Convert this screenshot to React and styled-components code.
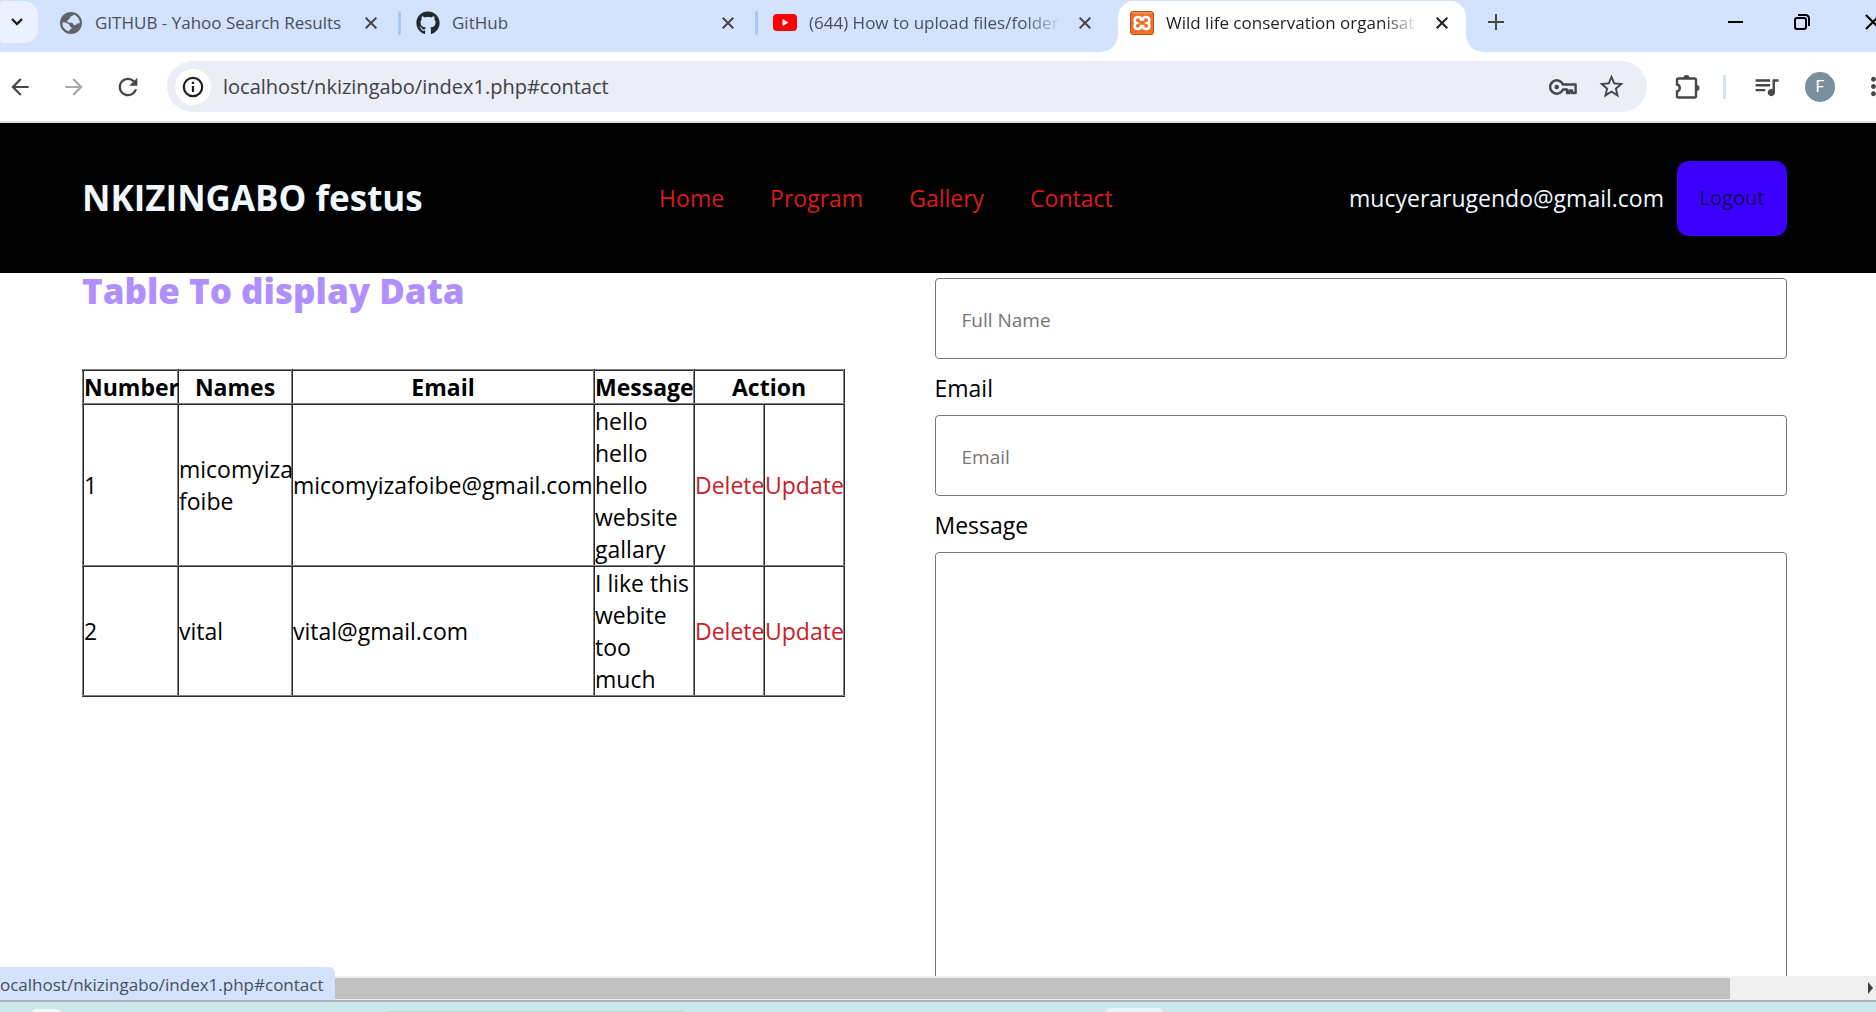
import React from "react";
import styled, { createGlobalStyle } from "styled-components";
import { FaGithub } from "react-icons/fa";
import { MdArrowBack, MdArrowForward, MdMoreVert, MdQueueMusic, MdRefresh, MdStarOutline } from "react-icons/md";

const GlobalStyle = createGlobalStyle`
  *, *::before, *::after { box-sizing: border-box; }
  body {
    margin: 0;
    background: #fff;
    color: #000;
    font-family: "Open Sans", "Noto Sans", sans-serif;
    font-size: 23px;
    line-height: 32px;
  }
  button, input, textarea { font: inherit; }
`;

const Shell = styled.div`
  display: flex;
  flex-direction: column;
  height: 100vh;
  overflow: hidden;
`;

const IconButton = styled.button`
  display: flex;
  flex: none;
  align-items: center;
  justify-content: center;
  width: ${(p) => p.$width || 40}px;
  height: 40px;
  padding: 0;
  border: 0;
  background: none;
  color: ${(p) => p.$color || "#47474a"};
`;

/* Tab strip */

const TabStrip = styled.div`
  display: flex;
  flex: none;
  height: 52px;
  background: #d3e2fd;
`;

const TabSearch = styled.button`
  display: flex;
  flex: none;
  align-items: center;
  justify-content: center;
  width: 38px;
  height: 42px;
  margin: 1px 6px 0 0;
  padding: 0 4px 0 0;
  border: 0;
  border-radius: 4px 14px 14px 4px;
  background: #ebf1fe;
  color: #1f1f1f;
`;

const Tab = styled.div`
  position: relative;
  display: flex;
  flex: none;
  align-items: center;
  gap: 12px;
  width: ${(p) => (p.$active ? 348 : 357)}px;
  height: ${(p) => (p.$active ? 51 : 45)}px;
  margin: ${(p) => (p.$active ? "1px 0 0 3px" : "0")};
  padding: ${(p) => (p.$active ? "0 12px 8px 12px" : "0 18px 0 15px")};
  border-radius: 16px 16px 0 0;
  background: ${(p) => (p.$active ? "#fff" : "none")};
  color: ${(p) => (p.$active ? "#1f1f1f" : "#47505c")};

  &::before, &::after {
    content: "";
    display: ${(p) => (p.$active ? "block" : "none")};
    position: absolute;
    bottom: 0;
    width: 16px;
    height: 16px;
  }
  &::before {
    right: 100%;
    background: radial-gradient(circle at 0 0, transparent 15px, #fff 16px);
  }
  &::after {
    left: 100%;
    background: radial-gradient(circle at 100% 0, transparent 15px, #fff 16px);
  }
`;

const Favicon = styled.span`
  display: flex;
  flex: none;
  align-items: center;
  justify-content: center;
  width: 24px;
  height: 24px;
  color: #24292f;
`;

const TabTitle = styled.span`
  flex: 1;
  min-width: 0;
  overflow: hidden;
  font-size: 17px;
  line-height: 24px;
  white-space: nowrap;
  mask-image: ${(p) => (p.$fade ? "linear-gradient(90deg, #000 86%, transparent)" : "none")};
`;

const TabDivider = styled.span`
  flex: none;
  width: 3px;
  height: 24px;
  margin: 11px 0 0 -3px;
  border-radius: 2px;
  background: #a8c7fa;
`;

const NewTab = styled(IconButton)`
  margin: 2px auto 0 10px;
`;

const WindowControls = styled.div`
  display: flex;
  flex: none;
  gap: 35px;
  margin: 2px -17px 0 0;
`;

/* Toolbar */

const Toolbar = styled.div`
  display: flex;
  flex: none;
  align-items: center;
  height: 71px;
  border-bottom: 2px solid #dfe1e1;
  background: #fff;
`;

const NavButtons = styled.div`
  display: flex;
  gap: 14px;
  margin-right: 19px;
`;

const Omnibox = styled.div`
  display: flex;
  flex: 1;
  align-items: center;
  height: 51px;
  margin-right: 20px;
  padding: 0 16px 0 8px;
  border-radius: 26px;
  background: #ebedf7;
`;

const SiteInfo = styled(IconButton)`
  width: 36px;
  height: 36px;
  border-radius: 18px;
  background: #fff;
  color: #1f1f1f;
`;

const Address = styled.input`
  flex: 1;
  min-width: 0;
  margin-left: 12px;
  padding: 0;
  border: 0;
  outline: 0;
  background: none;
  color: #404144;
  font-size: 20px;
`;

const ToolbarDivider = styled.span`
  width: 3px;
  height: 24px;
  margin: 0 20px 0 16px;
  background: #d3e2fd;
`;

const Avatar = styled.button`
  flex: none;
  width: 30px;
  height: 30px;
  margin: 0 18px 0 19px;
  padding: 0;
  border: 0;
  border-radius: 15px;
  background: #78909c;
  color: #fff;
  font-family: Roboto, sans-serif;
  font-size: 16px;
  line-height: 30px;
`;

const MenuButton = styled(IconButton)`
  margin-right: -17px;
`;

/* Page */

const Page = styled.main`
  flex: 1;
  min-height: 0;
  overflow: hidden;
`;

const Header = styled.header`
  display: flex;
  align-items: center;
  justify-content: space-between;
  height: 150px;
  padding: 0 89px 0 82px;
  background: #000;
  color: aliceblue;
`;

const Brand = styled.h1`
  margin: 0;
  font-size: 35px;
  font-weight: 700;
`;

const Nav = styled.nav`
  display: flex;
  gap: 46px;
`;

const Link = styled.a`
  color: ${(p) => (p.$nav ? "#dc1a1a" : "#c8202a")};
  text-decoration: none;
`;

const Account = styled.div`
  display: flex;
  align-items: center;
  gap: 13px;
`;

const Logout = styled.button`
  width: 110px;
  height: 75px;
  padding: 0;
  border: 0;
  border-radius: 12px;
  background: #3b00ff;
  color: #12005a;
  font-size: 20px;
`;

const Columns = styled.div`
  display: grid;
  grid-template-columns: 1fr 1fr;
  align-items: start;
  padding: 0 89px 0 82px;
`;

const Heading = styled.h2`
  margin: 0 0 60px;
  color: #b090ff;
  font-size: 35px;
  font-weight: 800;
  line-height: 36px;
`;

const DataTable = styled.table`
  width: 762px;
  table-layout: fixed;
  border-collapse: collapse;
`;

const Col = styled.col`
  width: ${(p) => p.$width}px;
`;

const cell = `
  height: 34px;
  padding: 0;
  border: 2px ridge #808080;
`;

const HeadCell = styled.th`
  ${cell}
  font-weight: 700;
`;

const Cell = styled.td`
  ${cell}
`;

const Form = styled.form`
  display: flex;
  flex-direction: column;
  padding-top: 5px;
`;

const Label = styled.label`
  margin: 13px 0 11px;
`;

const Field = styled.input`
  width: 100%;
  height: 81px;
  padding: 2px 26px 0;
  border: 1px solid #767676;
  border-radius: 4px;
  background: #fff;
  font-size: 19px;
  &::placeholder { color: #757575; }
`;

const MessageField = styled.textarea`
  width: 100%;
  height: 560px;
  padding: 26px;
  border: 1px solid #767676;
  border-radius: 4px;
  background: #fff;
  font-size: 19px;
  resize: none;
`;

/* Window bottom */

const BottomBar = styled.div`
  position: relative;
  display: flex;
  flex: none;
  align-items: center;
  height: 24px;
  background: #f0f0f0;
`;

const Thumb = styled.div`
  flex: 1;
  height: 21px;
  margin-right: 138px;
  background: #c1c1c1;
`;

const StatusBubble = styled.div`
  position: absolute;
  left: 0;
  bottom: 0;
  width: 335px;
  height: 33px;
  border-radius: 0 6px 0 0;
  background: #d3e2fd;
  color: #47505c;
  font-size: 17px;
  line-height: 36px;
  white-space: nowrap;
`;

const Taskbar = styled.div`
  display: flex;
  flex: none;
  align-items: flex-end;
  height: 12px;
  border-top: 2px solid #a5b5ba;
  background: #cde7ec;
`;

const TaskItem = styled.span`
  width: ${(p) => p.$width}px;
  height: ${(p) => p.$height}px;
  margin-left: ${(p) => p.$gap}px;
  border-radius: 6px 6px 0 0;
  background: ${(p) => p.$color};
`;

const Cross = ({ size = 12, weight = 2 }) => (
  <svg width={size} height={size} viewBox="0 0 12 12" fill="none" stroke="currentColor" strokeWidth={weight}>
    <path d="M.7.7 11.3 11.3M11.3.7.7 11.3" />
  </svg>
);

const Globe = () => (
  <svg width="22" height="22" viewBox="0 0 22 22">
    <circle cx="11" cy="11" r="11" fill="#5f6368" />
    <path d="M13.5 2.6c-1 2.3-3.4 1.3-3.6 3.3-.1 1.6-2.6 1.300-2.600 3 0 1.800 2 1.900 4.200 1.900 1.900 0 1.300 2.500 3.300 2.500 1.200 0 1.700-1.600 3-1.800.9-.1 1.500-.2 2-.1A8.600 8.600 0 0 0 13.500 2.600Z" fill="#d3e2fd" />
    <path d="M2.400 10.500c2.300-.2 5 .2 6.500 1.700 1.200 1.200.4 2.600 2 2.900 1.500.3 1 1.900-.3 2.200-1.100.3-1 1.400-1.600 2.200A8.600 8.600 0 0 1 2.400 10.500Z" fill="#d3e2fd" />
  </svg>
);

const YouTube = () => (
  <svg width="24" height="17" viewBox="0 0 24 17">
    <rect width="24" height="17" rx="4" fill="#f00" />
    <path d="M9.500 5v7l6-3.500Z" fill="#fff" />
  </svg>
);

const Xampp = () => (
  <svg width="24" height="24" viewBox="0 0 24 24">
    <rect x=".5" y=".5" width="23" height="23" rx="2.500" fill="#e8702a" stroke="#c4500f" />
    <path d="M2 2h20" stroke="#f5a875" />
    <path
      d="M8.500 6C5.700 6 4.600 7.600 4.600 9.200c0 1.500.8 2.400 1.800 2.800-1 .4-1.800 1.400-1.800 2.800C4.600 16.600 6 18 8 18s3-1.300 3-3h2c0 1.700 1 3 3 3s3.400-1.400 3.400-3.200c0-1.400-.8-2.400-1.800-2.800 1-.4 1.800-1.300 1.800-2.800C19.400 7.600 18.300 6 15.500 6c-1.700 0-2.500 1-2.500 2.500h-2C11 7 10.200 6 8.500 6Z"
      fill="none" stroke="#fff" strokeWidth="2.600"
    />
  </svg>
);

const Info = () => (
  <svg width="22" height="22" viewBox="0 0 22 22" fill="none" stroke="currentColor" strokeWidth="2.200">
    <circle cx="11" cy="11" r="9.200" />
    <path d="M11 10v6M11 5.800V8" />
  </svg>
);

const Key = () => (
  <svg width="28" height="16" viewBox="0 0 28 16" fill="none" stroke="currentColor" strokeWidth="2.400">
    <path d="M14 5.500A6.700 6.700 0 1 0 14 10.500h4V14h2.500v-2.500H23V14h3.600V5.500Z" strokeLinejoin="round" />
    <circle cx="7.800" cy="8" r="2.300" fill="currentColor" stroke="none" />
  </svg>
);

const Puzzle = () => (
  <svg width="25" height="25" viewBox="0 0 25 25">
    <path d="M3.500 4.500h16a1.500 1.500 0 0 1 1.500 1.500v16a1.500 1.500 0 0 1-1.500 1.500h-16A1.500 1.500 0 0 1 2 22v-4.500a3.600 3.600 0 0 0 0-7V6a1.500 1.500 0 0 1 1.500-1.500Z" fill="none" stroke="currentColor" strokeWidth="2.400" />
    <path d="M8.500 4a3 3 0 0 1 6 0ZM21.500 11a3 3 0 0 1 0 6Z" fill="currentColor" />
  </svg>
);

const tabs = [
  { title: "GITHUB - Yahoo Search Results", icon: <Globe /> },
  { title: "GitHub", icon: <FaGithub size={24} /> },
  { title: "(644) How to upload files/folder", icon: <YouTube />, fade: true },
  { title: "Wild life conservation organisat", icon: <Xampp />, fade: true, active: true },
];

const rows = [
  { id: 1, name: "micomyiza foibe", email: "micomyizafoibe@gmail.com", message: "hello hello hello website gallary" },
  { id: 2, name: "vital", email: "vital@gmail.com", message: "I like this webite too much" },
];

const columnWidths = [95, 114, 302, 100, 70, 80];

export default function App() {
  return (
    <Shell>
      <GlobalStyle />
      <TabStrip>
        <TabSearch aria-label="Search tabs">
          <svg width="12" height="8" viewBox="0 0 12 8" fill="none" stroke="currentColor" strokeWidth="2.400">
            <path d="m1 1 5 5 5-5" />
          </svg>
        </TabSearch>
        {tabs.map((tab, i) => (
          <React.Fragment key={tab.title}>
            <Tab $active={tab.active}>
              <Favicon>{tab.icon}</Favicon>
              <TabTitle $fade={tab.fade}>{tab.title}</TabTitle>
              <IconButton $width={24} $color={tab.active ? "#1f1f1f" : undefined} aria-label="Close tab">
                <Cross />
              </IconButton>
            </Tab>
            {i < 2 && <TabDivider />}
          </React.Fragment>
        ))}
        <NewTab aria-label="New tab">
          <svg width="16" height="16" viewBox="0 0 16 16" stroke="currentColor" strokeWidth="2">
            <path d="M8 0v16M0 8h16" />
          </svg>
        </NewTab>
        <WindowControls>
          <IconButton $width={32} $color="#000" aria-label="Minimize">
            <svg width="15" height="2" viewBox="0 0 15 2"><path d="M0 0h15v2H0z" fill="currentColor" /></svg>
          </IconButton>
          <IconButton $width={32} $color="#000" aria-label="Restore">
            <svg width="16" height="16" viewBox="0 0 16 16" fill="none" stroke="currentColor" strokeWidth="2">
              <rect x="1" y="4" width="11" height="11" rx="2" />
              <path d="M4 1h7.500A3.500 3.500 0 0 1 15 4.500V12" />
            </svg>
          </IconButton>
          <IconButton $width={40} $color="#000" aria-label="Close window">
            <Cross size={16} weight={1.5} />
          </IconButton>
        </WindowControls>
      </TabStrip>

      <Toolbar>
        <NavButtons>
          <IconButton aria-label="Back"><MdArrowBack size={26} /></IconButton>
          <IconButton $color="#a9a9ab" aria-label="Forward"><MdArrowForward size={26} /></IconButton>
          <IconButton aria-label="Reload"><MdRefresh size={28} /></IconButton>
        </NavButtons>
        <Omnibox>
          <SiteInfo aria-label="View site information"><Info /></SiteInfo>
          <Address aria-label="Address" defaultValue="localhost/nkizingabo/index1.php#contact" />
          <IconButton $width={56} aria-label="Passwords"><Key /></IconButton>
          <IconButton aria-label="Bookmark this tab"><MdStarOutline size={29} /></IconButton>
        </Omnibox>
        <IconButton aria-label="Extensions"><Puzzle /></IconButton>
        <ToolbarDivider />
        <IconButton aria-label="Media controls"><MdQueueMusic size={29} /></IconButton>
        <Avatar aria-label="Profile">F</Avatar>
        <MenuButton aria-label="Menu"><MdMoreVert size={29} /></MenuButton>
      </Toolbar>

      <Page>
        <Header>
          <Brand>NKIZINGABO festus</Brand>
          <Nav>
            <Link $nav href="#home">Home</Link>
            <Link $nav href="#program">Program</Link>
            <Link $nav href="#gallery">Gallery</Link>
            <Link $nav href="#contact">Contact</Link>
          </Nav>
          <Account>
            <span>mucyerarugendo@gmail.com</span>
            <Logout>Logout</Logout>
          </Account>
        </Header>
        <Columns>
          <section>
            <Heading>Table To display Data</Heading>
            <DataTable>
              <colgroup>
                {columnWidths.map((width, i) => <Col key={i} $width={width} />)}
              </colgroup>
              <thead>
                <tr>
                  <HeadCell>Number</HeadCell>
                  <HeadCell>Names</HeadCell>
                  <HeadCell>Email</HeadCell>
                  <HeadCell>Message</HeadCell>
                  <HeadCell colSpan={2}>Action</HeadCell>
                </tr>
              </thead>
              <tbody>
                {rows.map((row) => (
                  <tr key={row.id}>
                    <Cell>{row.id}</Cell>
                    <Cell>{row.name}</Cell>
                    <Cell>{row.email}</Cell>
                    <Cell>{row.message}</Cell>
                    <Cell><Link href="#delete">Delete</Link></Cell>
                    <Cell><Link href="#update">Update</Link></Cell>
                  </tr>
                ))}
              </tbody>
            </DataTable>
          </section>
          <Form>
            <Field type="text" aria-label="Full Name" placeholder="Full Name" />
            <Label htmlFor="email">Email</Label>
            <Field id="email" type="email" placeholder="Email" />
            <Label htmlFor="message">Message</Label>
            <MessageField id="message" />
          </Form>
        </Columns>
      </Page>

      <BottomBar>
        <Thumb />
        <svg width="8" height="12" viewBox="0 0 8 12"><path d="M0 0v12l5-6Z" fill="#404040" /></svg>
        <StatusBubble>ocalhost/nkizingabo/index1.php#contact</StatusBubble>
      </BottomBar>
      <Taskbar>
        <TaskItem $gap={33} $width={27} $height={3} $color="#f1f9fb" />
        <TaskItem $gap={328} $width={295} $height={1} $color="#b9d3d6" />
        <TaskItem $gap={423} $width={56} $height={4} $color="#ebf6f9" />
      </Taskbar>
    </Shell>
  );
}
